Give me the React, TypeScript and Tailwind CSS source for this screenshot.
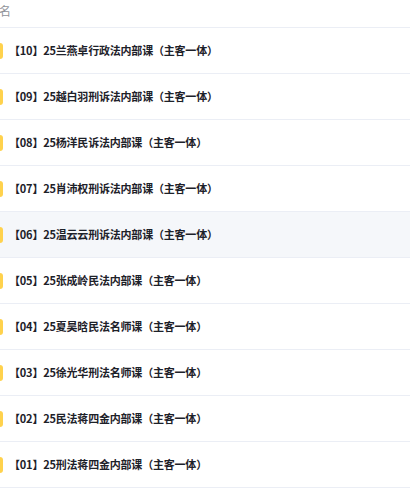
const items = [
  "【10】25兰燕卓行政法内部课（主客一体）",
  "【09】25越白羽刑诉法内部课（主客一体）",
  "【08】25杨洋民诉法内部课（主客一体）",
  "【07】25肖沛权刑诉法内部课（主客一体）",
  "【06】25温云云刑诉法内部课（主客一体）",
  "【05】25张成岭民法内部课（主客一体）",
  "【04】25夏昊晗民法名师课（主客一体）",
  "【03】25徐光华刑法名师课（主客一体）",
  "【02】25民法蒋四金内部课（主客一体）",
  "【01】25刑法蒋四金内部课（主客一体）",
]

export default function App() {
  return (
    <div className="w-[410px] h-[496px] overflow-hidden bg-white" style={{ fontFamily: '"Noto Sans CJK SC", "Noto Sans", sans-serif' }}>
      <div className="h-[28px] border-b border-[#ebeef5] flex items-start">
        <span className="text-[12px] leading-[12px] text-[#909399] mt-[5px] -ml-[1px]">名</span>
      </div>
      {items.map((name, i) => (
        <div
          key={name}
          className={`h-[46px] border-b border-[#ebeef5] flex items-center ${i === 4 ? "bg-[#f5f7fa]" : "bg-white"}`}
        >
          <div className="w-[3px] h-[16px] rounded-r-sm bg-[#ffd24d] mr-[6px]" />
          <span className="text-[11px] font-semibold tracking-[-0.2px] text-[#1d2129]">{name}</span>
        </div>
      ))}
    </div>
  )
}
